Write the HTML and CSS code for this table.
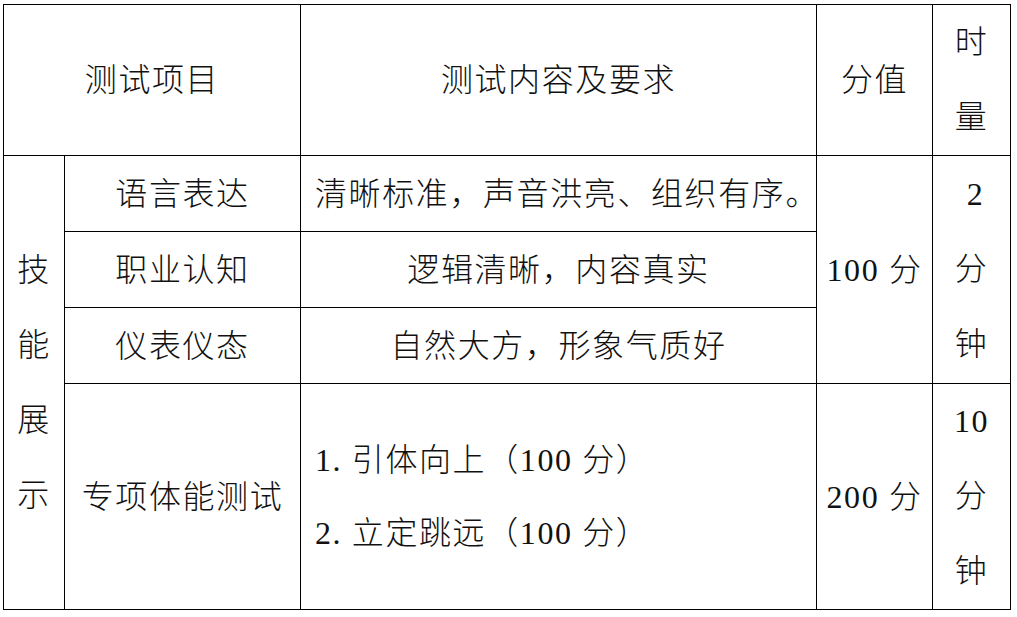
FILE: index.html
```html
<!DOCTYPE html>
<html lang="zh-CN">
<head>
<meta charset="utf-8">
<title>测试项目</title>
<link rel="stylesheet" href="styles.css">
</head>
<body>
<div class="page">
  <table class="grid">
    <colgroup>
      <col class="c1"><col class="c2"><col class="c3"><col class="c4"><col class="c5">
    </colgroup>
    <tr class="r-head">
      <td colspan="2">测试项目</td>
      <td>测试内容及要求</td>
      <td>分值</td>
      <td><div class="stack"><span>时</span><span>量</span></div></td>
    </tr>
    <tr class="r-mid">
      <td rowspan="4"><div class="stack"><span>技</span><span>能</span><span>展</span><span>示</span></div></td>
      <td>语言表达</td>
      <td class="left">清晰标准，声音洪亮、组织有序。</td>
      <td rowspan="3">100 分</td>
      <td rowspan="3"><div class="stack"><span class="num">2</span><span>分</span><span>钟</span></div></td>
    </tr>
    <tr class="r-mid">
      <td>职业认知</td>
      <td>逻辑清晰，内容真实</td>
    </tr>
    <tr class="r-mid">
      <td>仪表仪态</td>
      <td>自然大方，形象气质好</td>
    </tr>
    <tr class="r-big">
      <td>专项体能测试</td>
      <td class="left list"><div>1. 引体向上（100 分）</div><div>2. 立定跳远（100 分）</div></td>
      <td>200 分</td>
      <td><div class="stack"><span>10</span><span>分</span><span>钟</span></div></td>
    </tr>
  </table>
</div>
</body>
</html>
```

FILE: styles.css
```css
html, body {
  margin: 0;
  padding: 0;
  background: #ffffff;
}

.page {
  padding: 4px 0 0 3px;
}

.grid {
  border-collapse: collapse;
  table-layout: fixed;
  width: 1007px;
  font-family: "Liberation Serif", "Noto Sans CJK SC", serif;
  font-weight: 300;
  font-size: 32px;
  color: #111;
  letter-spacing: 1.6px;
}

.c1 { width: 61px; }
.c2 { width: 236px; }
.c3 { width: 516px; }
.c4 { width: 116px; }
.c5 { width: 78px; }

.grid td {
  border: 1.3px solid #000;
  padding: 0;
  text-align: center;
  vertical-align: middle;
  line-height: 36px;
  white-space: nowrap;
}

.r-head { height: 151px; }
.r-mid { height: 76px; }
.r-big { height: 226px; }

.grid td.left {
  text-align: left;
  padding-left: 14px;
}

.list {
  line-height: 73px !important;
}

.stack {
  display: flex;
  flex-direction: column;
  align-items: center;
  line-height: 75px;
}

.stack .num {
  padding-left: 8px;
}
```
